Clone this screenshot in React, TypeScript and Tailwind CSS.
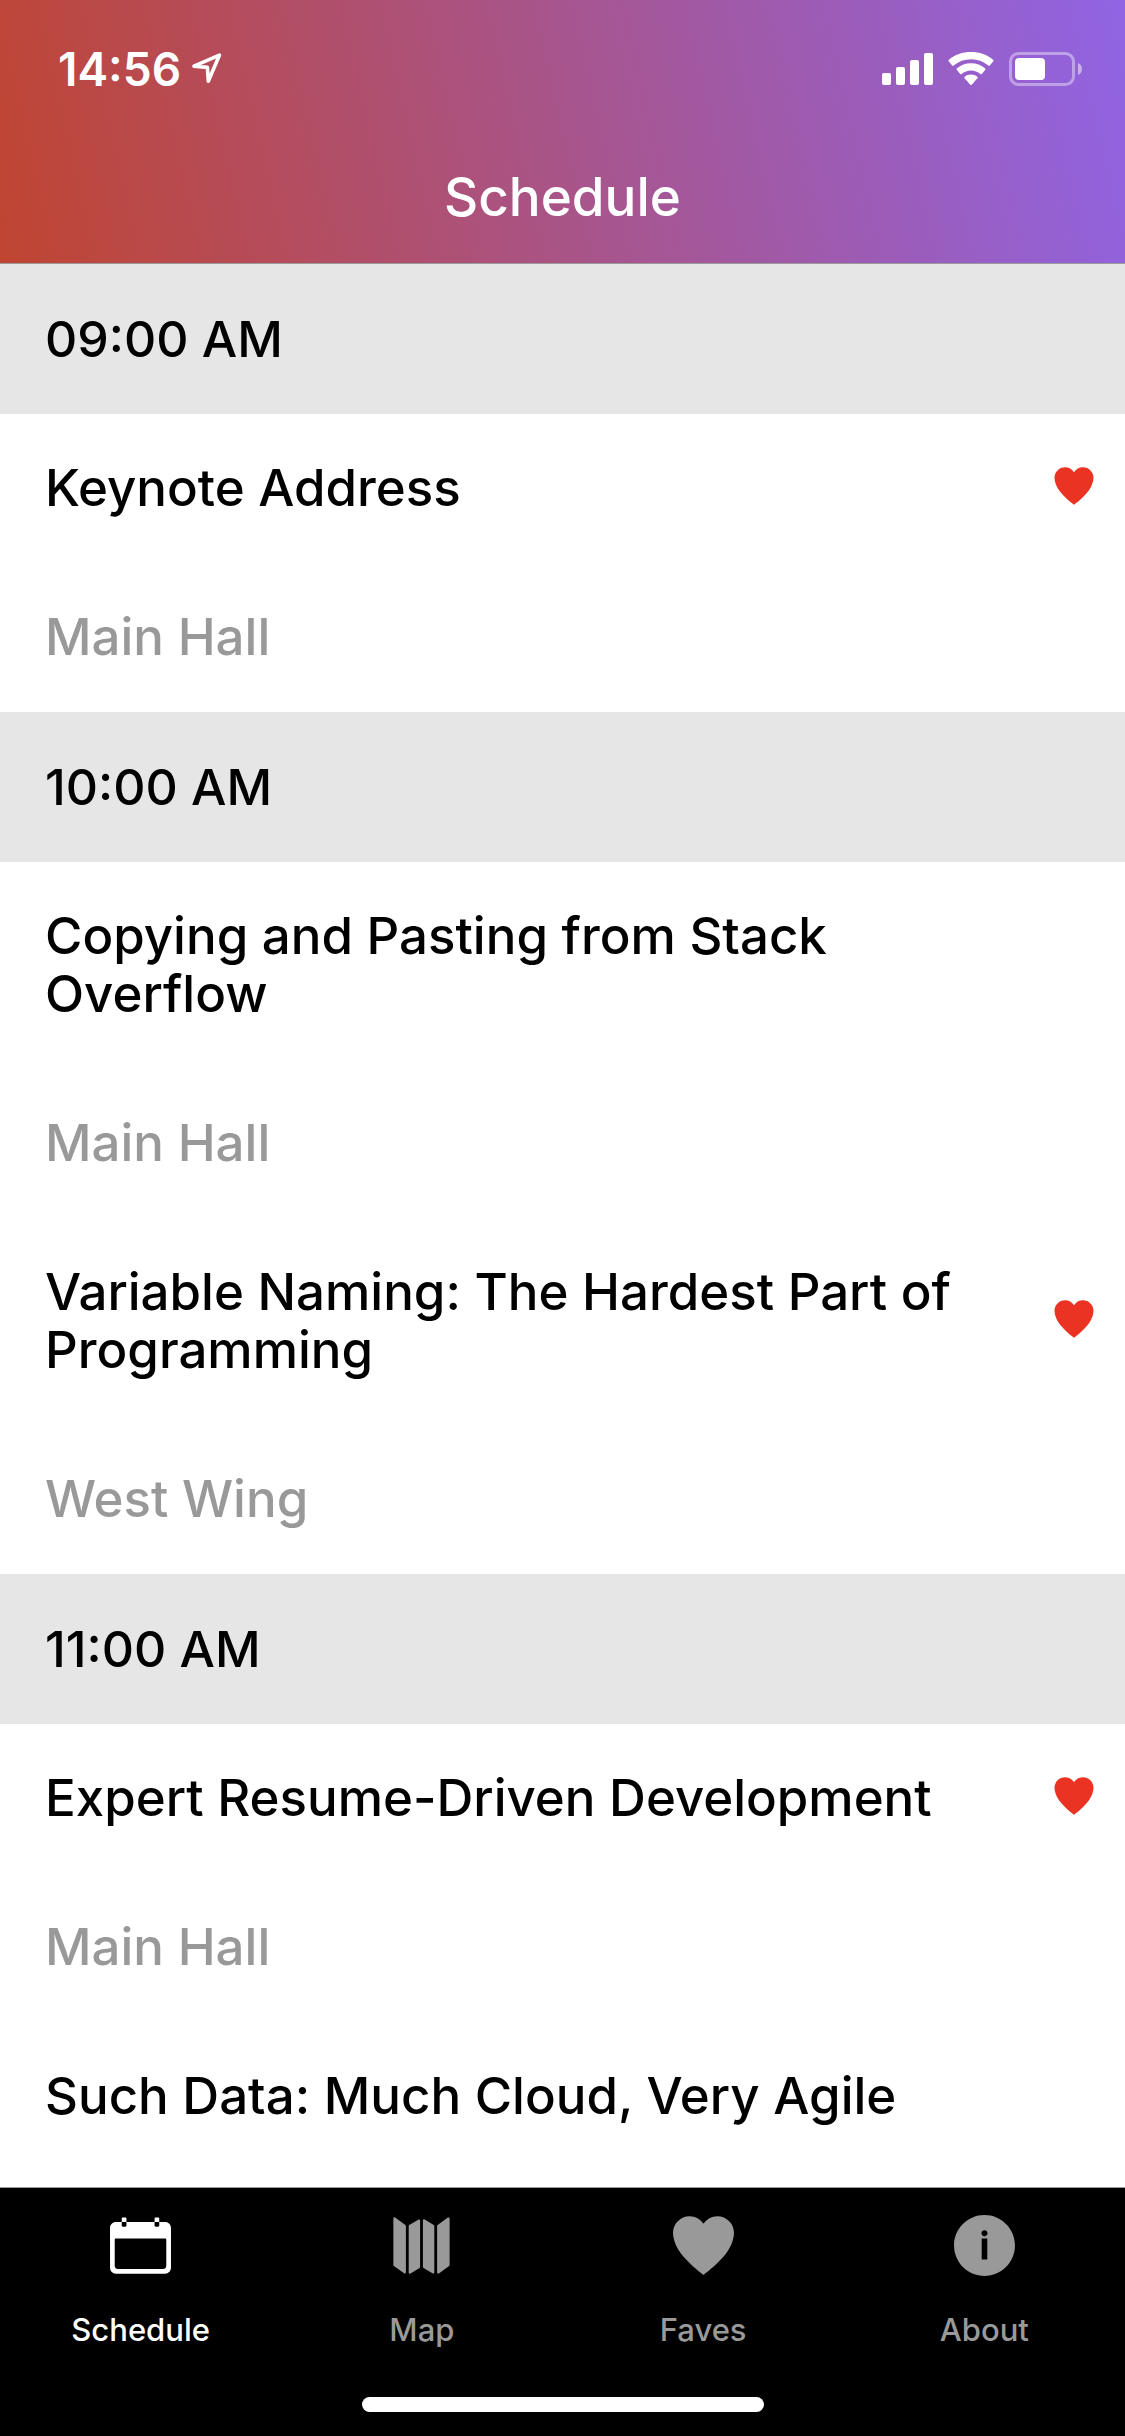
import React from "react";
import {
  IoIosCalendar,
  IoIosHeart,
  IoIosInformationCircle,
  IoIosMap,
} from "react-icons/io";

type Session = { title: string; location?: string; faved?: boolean };
type Block = { time: string; sessions: Session[] };

const schedule: Block[] = [
  {
    time: "09:00 AM",
    sessions: [{ title: "Keynote Address", location: "Main Hall", faved: true }],
  },
  {
    time: "10:00 AM",
    sessions: [
      {
        title: "Copying and Pasting from Stack Overflow",
        location: "Main Hall",
      },
      {
        title: "Variable Naming: The Hardest Part of Programming",
        location: "West Wing",
        faved: true,
      },
    ],
  },
  {
    time: "11:00 AM",
    sessions: [
      {
        title: "Expert Resume-Driven Development",
        location: "Main Hall",
        faved: true,
      },
      { title: "Such Data: Much Cloud, Very Agile" },
    ],
  },
];

const tabs = [
  { label: "Schedule", Icon: IoIosCalendar, active: true },
  { label: "Map", Icon: IoIosMap, active: false },
  { label: "Faves", Icon: IoIosHeart, active: false },
  { label: "About", Icon: IoIosInformationCircle, active: false },
];

function LocationArrow() {
  return (
    <svg width="32" height="32" viewBox="0 0 32 32" fill="none" aria-hidden="true">
      <path
        d="M3 13.2 28.4 2.2 17.3 28.2 16.4 14.4Z"
        stroke="white"
        strokeWidth="3.6"
        strokeLinejoin="round"
      />
    </svg>
  );
}

function Signal() {
  return (
    <svg width="51" height="34" viewBox="0 0 51 34" fill="white" aria-hidden="true">
      <rect x="0" y="21" width="9" height="12" rx="2" />
      <rect x="14" y="15" width="9" height="18" rx="2" />
      <rect x="28" y="8" width="9" height="25" rx="2" />
      <rect x="42" y="1" width="9" height="32" rx="2" />
    </svg>
  );
}

function Wifi() {
  return (
    <svg width="46" height="34" viewBox="0 0 46 34" fill="white" aria-hidden="true">
      <path d="M.7 9.3a1 1 0 0 1 0-1.4C6.7 2.6 14.5 0 23 0s16.3 2.6 22.3 7.9a1 1 0 0 1 0 1.4l-3.5 4.2a1 1 0 0 1-1.4.1C35.500 9.400 29.600 7.200 23 7.200S10.500 9.400 5.600 13.600a1 1 0 0 1-1.400-.1Z" />
      <path d="M8.700 17.800a1 1 0 0 1 .1-1.400C12.700 13 17.600 11.200 23 11.200s10.300 1.800 14.200 5.200a1 1 0 0 1 .1 1.400l-3.500 4.100a1 1 0 0 1-1.400.1C29.700 19.700 26.500 18.400 23 18.400s-6.700 1.300-9.400 3.600a1 1 0 0 1-1.400-.1Z" />
      <path d="M16.600 26.200a1 1 0 0 1 .1-1.400C18.400 23.400 20.600 22.600 23 22.600s4.600.8 6.300 2.200a1 1 0 0 1 .1 1.400l-5.700 6.500a1 1 0 0 1-1.400 0Z" />
    </svg>
  );
}

function Battery() {
  return (
    <svg width="73" height="34" viewBox="0 0 73 34" fill="white" aria-hidden="true">
      <rect
        x="1.5"
        y="1.5"
        width="63"
        height="31"
        rx="8"
        fill="none"
        stroke="white"
        strokeOpacity="0.4"
        strokeWidth="3"
      />
      <rect x="6" y="6" width="30" height="22" rx="4" />
      <path d="M69 11c2.500 1 4 3.300 4 6s-1.500 5-4 6Z" fillOpacity="0.5" />
    </svg>
  );
}

export default function App() {
  return (
    <div className="flex h-screen flex-col bg-white font-['Inter',sans-serif] font-medium text-black">
      <header className="shrink-0 border-b border-[#9b9b9b] bg-[linear-gradient(77deg,#c04531,#9064e4)] pt-[52px] text-white">
        <div className="mb-[45px] flex h-[34px] items-center justify-between pr-[43px] pl-[58px]">
          <div className="flex items-center gap-2.5">
            <span className="text-[46px] leading-[34px] font-semibold">14:56</span>
            <LocationArrow />
          </div>
          <div className="flex items-center gap-[15px]">
            <Signal />
            <Wifi />
            <Battery />
          </div>
        </div>
        <h1 className="flex h-[132px] items-center justify-center text-[53px] leading-[60px]">
          Schedule
        </h1>
      </header>

      <main className="min-h-0 flex-1 overflow-hidden text-[51px] leading-[58px]">
        {schedule.map((block) => (
          <section key={block.time}>
            <h2 className="bg-[#e6e6e6] px-[45px] py-[46px] text-[50px] leading-[58px]">
              {block.time}
            </h2>
            <ul>
              {block.sessions.map((session) => (
                <li key={session.title}>
                  <a href="#session" className="block">
                    <div className="flex items-center pr-[27px]">
                      <h3 className="flex-1 px-[45px] pt-[45px] pb-[46px]">
                        {session.title}
                      </h3>
                      <div className="mb-1.5 size-12 shrink-0">
                        {session.faved && (
                          <IoIosHeart
                            className="size-12 text-[#ea3323]"
                            aria-label="Faved"
                          />
                        )}
                      </div>
                    </div>
                    {session.location && (
                      <p className="px-[45px] pt-[45px] pb-[46px] text-[#999999]">
                        {session.location}
                      </p>
                    )}
                  </a>
                </li>
              ))}
            </ul>
          </section>
        ))}
      </main>

      <footer className="shrink-0 border-t border-[#999999] bg-black pt-5 pb-6">
        <nav className="grid grid-cols-4">
          {tabs.map(({ label, Icon, active }) => (
            <a
              key={label}
              href={"#" + label.toLowerCase()}
              aria-current={active ? "page" : undefined}
              className={
                active
                  ? "flex flex-col items-center gap-[25px] text-white"
                  : "flex flex-col items-center gap-[25px] text-[#999999]"
              }
            >
              <Icon className="size-[75px]" aria-hidden="true" />
              <span className="text-[31px] leading-[44px]">{label}</span>
            </a>
          ))}
        </nav>
        <div className="mx-auto mt-[45px] h-[15px] w-[402px] rounded-full bg-white" />
      </footer>
    </div>
  );
}
